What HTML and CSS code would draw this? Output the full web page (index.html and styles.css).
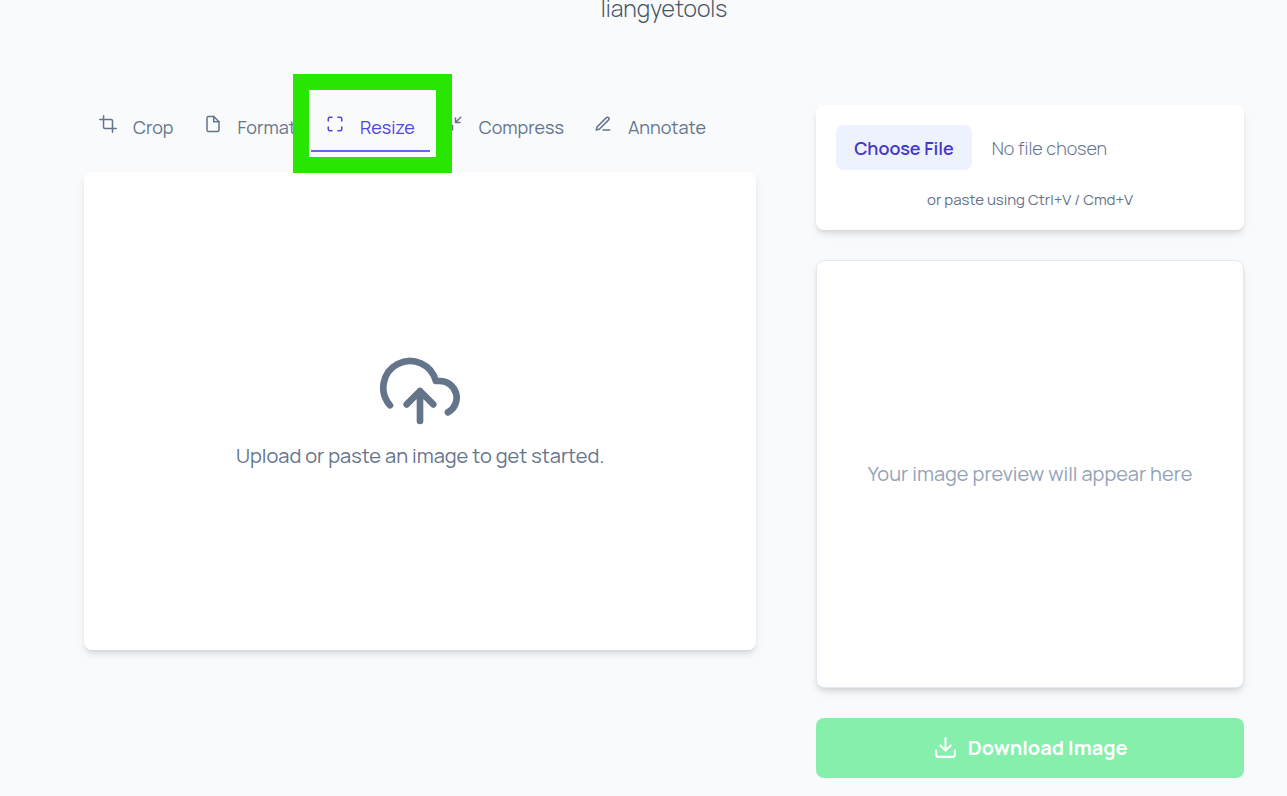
FILE: index.html
```html
<!DOCTYPE html>
<html lang="en">

<head>
    <meta charset="UTF-8">
    <meta name="viewport" content="width=device-width, initial-scale=1.0">
    <title>liangyetools</title>
    <link rel="stylesheet" href="styles.css">
</head>

<body>
    <div class="container">
        <header class="header">
            <p class="subtitle">liangyetools</p>
        </header>

        <main class="layout">
            <section class="editor">
                <nav class="tabs">
                    <button type="button" class="tab">
                        <svg class="icon" viewBox="0 0 24 24"><path d="M6.13 1L6 16a2 2 0 0 0 2 2h15"/><path d="M1 6.13L16 6a2 2 0 0 1 2 2v15"/></svg>
                        Crop
                    </button>
                    <button type="button" class="tab">
                        <svg class="icon" viewBox="0 0 24 24"><path d="M13 2H6a2 2 0 0 0-2 2v16a2 2 0 0 0 2 2h12a2 2 0 0 0 2-2V9z"/><path d="M13 2v7h7"/></svg>
                        Format
                    </button>
                    <button type="button" class="tab active">
                        <svg class="icon" viewBox="0 0 24 24"><path d="M8 3H5a2 2 0 0 0-2 2v3m18 0V5a2 2 0 0 0-2-2h-3m0 18h3a2 2 0 0 0 2-2v-3M3 16v3a2 2 0 0 0 2 2h3"/></svg>
                        Resize
                        <span class="highlight"></span>
                    </button>
                    <button type="button" class="tab">
                        <svg class="icon" viewBox="0 0 24 24"><path d="M4 14h6v6M20 10h-6V4M14 10l7-7M3 21l7-7"/></svg>
                        Compress
                    </button>
                    <button type="button" class="tab">
                        <svg class="icon" viewBox="0 0 24 24"><path d="M12 20h9"/><path d="M16.5 3.5a2.121 2.121 0 0 1 3 3L7 19l-4 1 1-4L16.5 3.5z"/></svg>
                        Annotate
                    </button>
                </nav>

                <div class="card dropzone">
                    <svg class="icon cloud" viewBox="0 0 24 24"><path d="M16 16l-4-4-4 4M12 12v9"/><path d="M20.39 18.39A5 5 0 0 0 18 9h-1.26A8 8 0 1 0 3 16.3"/></svg>
                    <p>Upload or paste an image to get started.</p>
                </div>
            </section>

            <aside class="sidebar">
                <div class="card upload">
                    <input type="file" class="file-input" accept="image/*" aria-label="Choose image">
                    <p class="hint">or paste using Ctrl+V / Cmd+V</p>
                </div>

                <div class="card preview">
                    <p>Your image preview will appear here</p>
                </div>

                <button type="button" class="download" disabled>
                    <svg class="icon" viewBox="0 0 24 24"><path d="M21 15v4a2 2 0 0 1-2 2H5a2 2 0 0 1-2-2v-4M7 10l5 5 5-5M12 15V3"/></svg>
                    Download Image
                </button>
            </aside>
        </main>
    </div>
</body>

</html>
```
FILE: styles.css
```css
:root {
    --bg: #f8fafc;
    --text: #64748b;
    --text-dark: #475569;
    --text-light: #94a3b8;
    --border: #e2e8f0;
    --primary: #4f46e5;
    --primary-dark: #4338ca;
    --primary-light: #eef2ff;
    --success: #86efac;
    --highlight: #28e600;
}

* {
    box-sizing: border-box;
}

body {
    margin: 0;
    background-color: var(--bg);
    color: var(--text);
    font-family: Manrope, Inter, sans-serif;
    font-size: 20px;
    font-weight: 400;
}

p {
    margin: 0;
}

button {
    font-family: inherit;
    cursor: pointer;
}

.container {
    padding: 0 43px 18px 84px;
}

.header {
    margin-bottom: 89px;
    text-align: center;
}

.subtitle {
    color: var(--text-dark);
    font-size: 23px;
    font-weight: 300;
    line-height: 16px;
}

.layout {
    display: grid;
    grid-template-columns: 11fr 7fr;
    gap: 60px;
    align-items: start;
}

.icon {
    width: 18px;
    height: 18px;
    flex-shrink: 0;
    fill: none;
    stroke: currentColor;
    stroke-width: 2;
    stroke-linecap: round;
    stroke-linejoin: round;
}

.tabs {
    display: flex;
    margin-bottom: 20px;
}

.tab {
    position: relative;
    display: flex;
    gap: 16px;
    padding: 10px 15px;
    border: none;
    border-bottom: 2px solid transparent;
    background: none;
    color: var(--text);
    font-size: 18px;
    font-weight: 400;
    line-height: 25px;
}

.tab.active {
    color: var(--primary);
    border-bottom-color: #6366f1;
}

/* frame around the active tool */
.highlight {
    position: absolute;
    z-index: 1;
    top: -31px;
    right: -22px;
    bottom: -23px;
    left: -18px;
    border: 16px solid var(--highlight);
    pointer-events: none;
}

.card {
    background: #fff;
    border-radius: 8px;
    box-shadow: 0 5px 8px -1px rgba(0, 0, 0, 0.1), 0 3px 5px -2px rgba(0, 0, 0, 0.1);
}

.dropzone {
    display: flex;
    flex-direction: column;
    align-items: center;
    justify-content: center;
    gap: 10px;
    min-height: 60vh;
    line-height: 30px;
}

.cloud {
    width: 80px;
    height: 80px;
}

.sidebar {
    display: flex;
    flex-direction: column;
    gap: 30px;
}

.upload {
    padding: 20px;
}

.file-input {
    display: block;
    width: 100%;
    color: var(--text);
    font-family: inherit;
    font-size: 18px;
    font-weight: 300;
}

.file-input::file-selector-button {
    height: 45px;
    margin-right: 20px;
    padding: 0 18px;
    border: none;
    border-radius: 8px;
    background: var(--primary-light);
    color: var(--primary-dark);
    font-family: inherit;
    font-size: 18px;
    font-weight: 600;
    cursor: pointer;
}

.hint {
    margin-top: 20px;
    font-size: 15px;
    line-height: 20px;
    text-align: center;
}

.preview {
    display: flex;
    align-items: center;
    justify-content: center;
    aspect-ratio: 1;
    border: 1px solid var(--border);
    color: var(--text-light);
}

.download {
    display: flex;
    align-items: center;
    justify-content: center;
    gap: 10px;
    padding: 15px;
    border: none;
    border-radius: 8px;
    background: var(--success);
    color: #fff;
    font-size: 20px;
    font-weight: 700;
    line-height: 30px;
}

.download .icon {
    width: 25px;
    height: 25px;
}

.download:disabled {
    cursor: not-allowed;
}

@media (max-width: 900px) {
    .container {
        padding: 0 20px 20px;
    }

    .layout {
        grid-template-columns: 1fr;
    }

    .tabs {
        flex-wrap: wrap;
    }
}
```
